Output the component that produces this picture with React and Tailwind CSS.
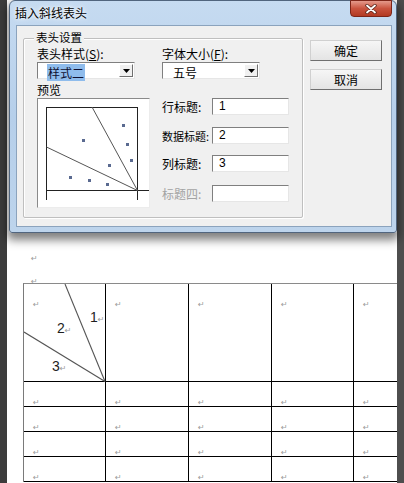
import React from "react";

const cjk = "font-['Noto_Sans_CJK_SC','Liberation_Sans',sans-serif]";

const Mark = ({ className = "" }) => (
  <span className={`font-['DejaVu_Sans',sans-serif] text-[8px] leading-none text-[#9a9a9a] ${className}`}>↵</span>
);

const Combo = ({ value, selected }) => (
  <div className="h-[17px] w-[98px] flex items-center bg-white border border-t-[#7f7f7f] border-l-[#7f7f7f] border-b-[#e6e6e6] border-r-[#e6e6e6]">
    <div className="flex-1 pl-[9px]">
      <span className={`px-[1px] text-[12px] leading-[14px] ${selected ? "bg-[#8fbcec] text-[#101030]" : "text-black"}`}>
        {value}
      </span>
    </div>
    <div className="mr-[1px] w-[14px] h-[13px] flex items-center justify-center bg-[#f0f0f0] border border-t-white border-l-white border-b-[#6f6f6f] border-r-[#6f6f6f]">
      <svg width="7" height="4" viewBox="0 0 7 4">
        <path d="M0 0h7L3.5 4z" fill="#000" />
      </svg>
    </div>
  </div>
);

const Field = ({ label, value, disabled, small, className = "" }) => (
  <div className={`flex items-center h-[17px] ${className}`}>
    <div className={`w-[50px] whitespace-nowrap leading-[16px] ${small ? "text-[11px]" : "text-[12px]"} ${disabled ? "text-[#a3a3a3]" : "text-black"}`}>{label}</div>
    <div className="w-[77px] h-[17px] bg-white border border-t-[#7f7f7f] border-l-[#7f7f7f] border-b-[#e6e6e6] border-r-[#e6e6e6] pl-[6px] text-[12px] leading-[15px] font-['Liberation_Sans',sans-serif] text-black">
      {value}
    </div>
  </div>
);

const Button = ({ children, className = "" }) => (
  <div className={`w-[72px] h-[21px] flex items-center justify-center text-[12px] text-black bg-gradient-to-b from-[#f6f6f6] to-[#e4e4e4] border border-t-[#d0d0d0] border-l-[#d0d0d0] border-b-[#6f6f6f] border-r-[#6f6f6f] ${className}`}>
    {children}
  </div>
);

const Preview = () => (
  <div className="w-[113px] h-[110px] bg-white border border-t-[#8a8a8a] border-l-[#8a8a8a] border-b-[#ececec] border-r-[#ececec]">
    <svg width="111" height="108" viewBox="0 0 111 108">
      <g stroke="#222" strokeWidth="1" fill="none">
        <path d="M8.5 8v93" />
        <path d="M99.5 8v93" />
        <path d="M8 8.5h92" />
        <path d="M8 91.5h103" />
      </g>
      <g stroke="#555" strokeWidth="1" fill="none">
        <path d="M54 8L99.5 91.5" />
        <path d="M8.5 48L99.5 91.5" />
      </g>
      <g fill="#5a6a90">
        <rect x="84" y="25" width="3" height="3" />
        <rect x="44" y="40" width="3" height="3" />
        <rect x="88" y="44" width="3" height="3" />
        <rect x="92" y="60" width="3" height="3" />
        <rect x="70" y="65" width="3" height="3" />
        <rect x="31" y="77" width="3" height="3" />
        <rect x="50" y="80" width="3" height="3" />
        <rect x="68" y="84" width="3" height="3" />
      </g>
    </svg>
  </div>
);

const Dialog = () => (
  <div className={`absolute left-[9px] top-0 w-[388px] h-[233px] flex flex-col rounded-t-[6px] rounded-b-[3px] border border-[#51657e] bg-gradient-to-b from-[#c6dbf1] via-[#b6cfea] to-[#bdd4ec] shadow-[0_5px_10px_2px_rgba(0,0,0,0.5)] ${cjk}`}>
    <div className="h-[24px] flex items-start justify-between pl-[5px] pr-[4px]">
      <div className="pt-[4px] text-[12px] leading-[16px] text-black [text-shadow:0_0_6px_#fff,0_0_3px_#fff]">插入斜线表头</div>
      <div className="w-[42px] h-[17px] -mt-[1px] rounded-b-[4px] border border-[#7d2518] bg-gradient-to-b from-[#e4998b] via-[#c9533e] to-[#b23a23] flex items-center justify-center">
        <svg width="12" height="10" viewBox="0 0 12 10">
          <path d="M2 1.5l8 7M10 1.5l-8 7" stroke="#5a2418" strokeWidth="3.4" strokeLinecap="round" />
          <path d="M2 1.5l8 7M10 1.5l-8 7" stroke="#fff" strokeWidth="1.8" strokeLinecap="round" />
        </svg>
      </div>
    </div>
    <div className="ml-[6px] mr-[4px] h-[202px] bg-[#f0f0f0] border border-[#8ba3bd] flex pl-[6px] pt-[12px]">
      <div className="relative w-[280px] h-[180px] border border-[#bfbfbf] rounded-[2px] shadow-[inset_1px_1px_0_#fff,1px_1px_0_#fff] flex pl-[13px] pt-[6px]">
        <div className="absolute left-[10px] top-[-8px] px-[2px] bg-[#f0f0f0] text-[11.5px] leading-[12px] text-black">表头设置</div>
        <div className="w-[113px] flex flex-col">
          <div className="h-[17px] text-[12px] leading-[17px] text-black">表头样式(<u>S</u>):</div>
          <Combo value="样式二" selected />
          <div className="mt-[3px] h-[16px] text-[12px] leading-[16px] text-black">预览</div>
          <Preview />
        </div>
        <div className="ml-[12px] flex flex-col">
          <div className="h-[17px] text-[12px] leading-[17px] text-black">字体大小(<u>F</u>):</div>
          <Combo value="五号" />
          <Field label="行标题:" value="1" className="mt-[19px]" />
          <Field label="数据标题:" value="2" small className="mt-[12px]" />
          <Field label="列标题:" value="3" className="mt-[11px]" />
          <Field label="标题四:" value="" disabled className="mt-[13px]" />
        </div>
      </div>
      <div className="ml-[7px] pt-[2px] flex flex-col gap-[8px]">
        <Button>确定</Button>
        <Button>取消</Button>
      </div>
    </div>
  </div>
);

const Cell = ({ children, className = "" }) => (
  <div className={`relative border-r border-b border-black pl-[9px] pt-[5px] ${className}`}>
    <Mark />
    {children}
  </div>
);

export default function App() {
  const cols = [0, 1, 2, 3, 4];
  const rows = [0, 1, 2, 3];
  return (
    <div className="relative w-[404px] h-[483px] overflow-hidden flex bg-[#474747]">
      <div className="w-[7px] bg-[#3c3c3c]" />
      <div className="w-[390px] bg-white overflow-hidden pt-[237px]">
        <div className="h-[23px] pl-[24px] pt-[6px]">
          <Mark />
        </div>
        <div className="h-[23px] pl-[24px] pt-[6px]">
          <Mark />
        </div>
        <div className="ml-[16px] w-[415px] grid grid-cols-[82px_83px_83px_82px_83px] border-l border-t border-l-[#7a7a7a] border-t-[#8a8a8a]">
          <Cell className="h-[98px]">
            <svg className="absolute left-0 top-0" width="82" height="98" viewBox="0 0 82 98">
              <path d="M41 0L81 97.5" stroke="#555" strokeWidth="1.1" fill="none" />
              <path d="M0 48L81 97.5" stroke="#555" strokeWidth="1.1" fill="none" />
            </svg>
            <span className="absolute left-[66px] top-[24px] font-['Liberation_Sans',sans-serif] text-[14px] leading-[18px] text-[#1e1e1e]">1<Mark className="text-[6px]" /></span>
            <span className="absolute left-[33px] top-[35px] font-['Liberation_Sans',sans-serif] text-[14px] leading-[18px] text-[#1e1e1e]">2<Mark className="text-[6px]" /></span>
            <span className="absolute left-[28px] top-[73px] font-['Liberation_Sans',sans-serif] text-[14px] leading-[18px] text-[#1e1e1e]">3<Mark className="text-[6px]" /></span>
          </Cell>
          {cols.slice(1).map((c) => (
            <Cell key={`h${c}`} className="h-[98px]" />
          ))}
          {rows.map((r) =>
            cols.map((c) => <Cell key={`${r}-${c}`} className="h-[25px]" />)
          )}
        </div>
      </div>
      <div className="flex-1 bg-[#4e4e4e]" />
      <Dialog />
    </div>
  );
}
